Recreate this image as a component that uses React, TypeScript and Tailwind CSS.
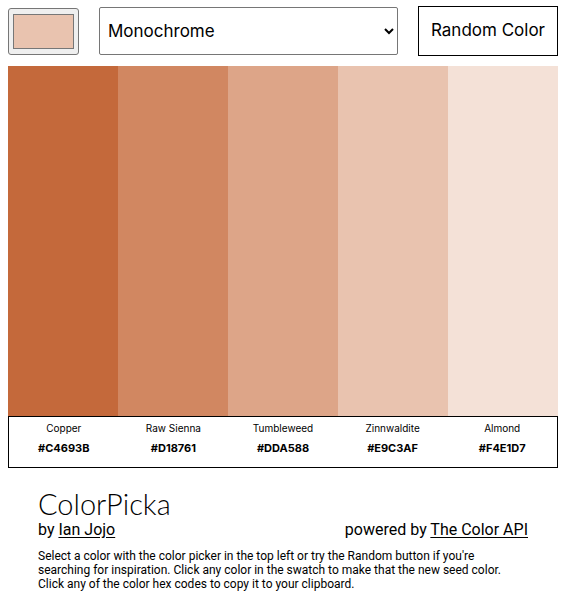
import { useState } from "react";

const swatches = [
  { name: "Copper", hex: "#C4693B" },
  { name: "Raw Sienna", hex: "#D18761" },
  { name: "Tumbleweed", hex: "#DDA588" },
  { name: "Zinnwaldite", hex: "#E9C3AF" },
  { name: "Almond", hex: "#F4E1D7" },
];

const modes = ["Monochrome", "Monochrome-dark", "Monochrome-light", "Analogic", "Complement", "Triad", "Quad"];

export default function App() {
  const [seed, setSeed] = useState("#e9c3af");
  const [mode, setMode] = useState("Monochrome");

  const randomize = () => {
    const value = Math.floor(Math.random() * 0xffffff);
    setSeed("#" + value.toString(16).padStart(6, "0"));
  };

  return (
    <div className="bg-white px-2 pt-1.5 font-[Inter,'Noto_Sans',sans-serif] text-black">
      <header className="flex items-center gap-5">
        <input
          type="color"
          aria-label="Seed color"
          value={seed}
          onChange={(e) => setSeed(e.target.value)}
          className="h-[47px] w-[71px] shrink-0 rounded-[3px] border border-[#767676] bg-[#efefef] px-0.5 py-px"
        />
        <select
          aria-label="Color scheme"
          value={mode}
          onChange={(e) => setMode(e.target.value)}
          className="h-12 min-w-0 grow rounded-[2px] border border-[#767676] bg-white px-1 text-[17px]"
        >
          {modes.map((m) => (
            <option key={m}>{m}</option>
          ))}
        </select>
        <button
          type="button"
          onClick={randomize}
          className="h-[50px] w-[140px] shrink-0 border border-black bg-white text-[17px] whitespace-nowrap"
        >
          Random Color
        </button>
      </header>

      <main className="mt-2.5">
        <div className="grid h-[350px] grid-cols-5">
          {swatches.map((s) => (
            <button
              key={s.hex}
              type="button"
              aria-label={"Use " + s.name + " as seed color"}
              onClick={() => setSeed(s.hex.toLowerCase())}
              style={{ backgroundColor: s.hex }}
            />
          ))}
        </div>
        <div className="grid h-[52px] grid-cols-5 border border-black pt-[3px] text-center">
          {swatches.map((s) => (
            <div key={s.hex} className="flex flex-col items-center gap-1">
              <p className="text-[10px] leading-4">{s.name}</p>
              <button
                type="button"
                onClick={() => navigator.clipboard?.writeText(s.hex)}
                className="text-[11px] leading-4 font-bold"
              >
                {s.hex}
              </button>
            </div>
          ))}
        </div>
      </main>

      <footer className="px-[30px] pt-5 font-[Roboto,sans-serif]">
        <h1 className="font-[Lato,sans-serif] text-[29px] leading-8 font-light">ColorPicka</h1>
        <div className="flex justify-between text-base leading-5">
          <p>
            by{" "}
            <a href="#author" className="underline underline-offset-2">
              Ian Jojo
            </a>
          </p>
          <p>
            powered by{" "}
            <a href="#api" className="underline underline-offset-2">
              The Color API
            </a>
          </p>
        </div>
        <p className="mt-[9px] text-xs leading-3.5">
          Select a color with the color picker in the top left or try the Random button if you're
          <br />
          searching for inspiration. Click any color in the swatch to make that the new seed color.
          <br />
          Click any of the color hex codes to copy it to your clipboard.
        </p>
      </footer>
    </div>
  );
}
